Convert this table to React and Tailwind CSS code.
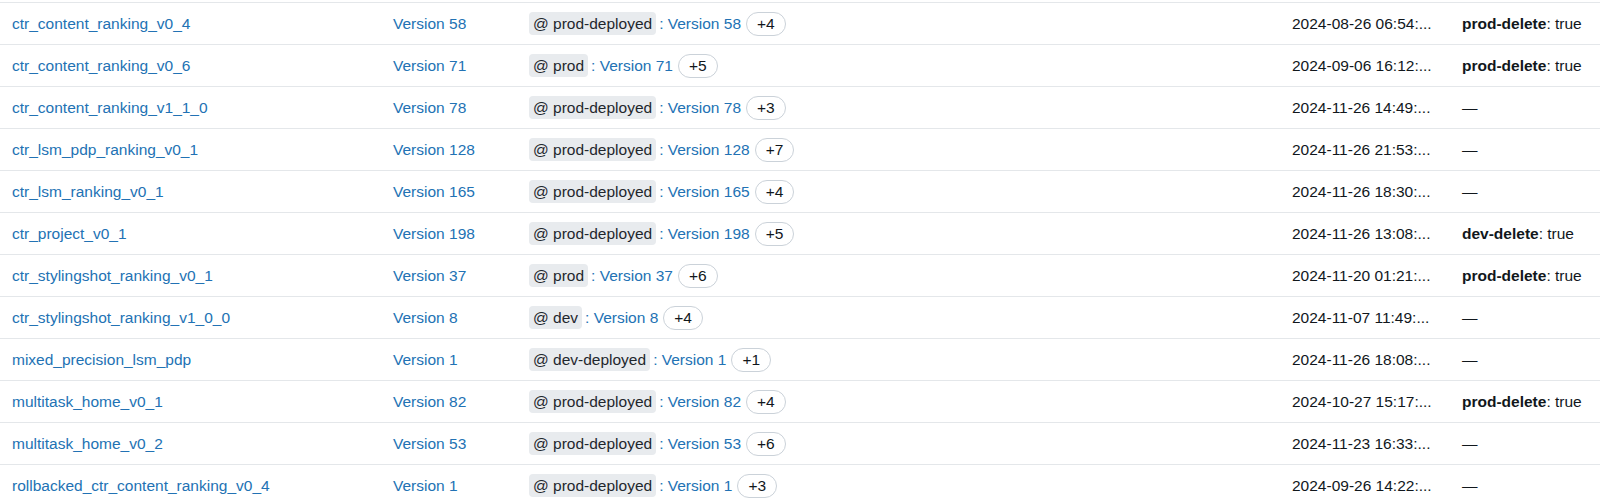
import React from "react";

const rows = [
  ["ctr_content_ranking_v0_4", "58", "prod-deployed", "+4", "2024-08-26 06:54:...", "prod-delete"],
  ["ctr_content_ranking_v0_6", "71", "prod", "+5", "2024-09-06 16:12:...", "prod-delete"],
  ["ctr_content_ranking_v1_1_0", "78", "prod-deployed", "+3", "2024-11-26 14:49:...", null],
  ["ctr_lsm_pdp_ranking_v0_1", "128", "prod-deployed", "+7", "2024-11-26 21:53:...", null],
  ["ctr_lsm_ranking_v0_1", "165", "prod-deployed", "+4", "2024-11-26 18:30:...", null],
  ["ctr_project_v0_1", "198", "prod-deployed", "+5", "2024-11-26 13:08:...", "dev-delete"],
  ["ctr_stylingshot_ranking_v0_1", "37", "prod", "+6", "2024-11-20 01:21:...", "prod-delete"],
  ["ctr_stylingshot_ranking_v1_0_0", "8", "dev", "+4", "2024-11-07 11:49:...", null],
  ["mixed_precision_lsm_pdp", "1", "dev-deployed", "+1", "2024-11-26 18:08:...", null],
  ["multitask_home_v0_1", "82", "prod-deployed", "+4", "2024-10-27 15:17:...", "prod-delete"],
  ["multitask_home_v0_2", "53", "prod-deployed", "+6", "2024-11-23 16:33:...", null],
  ["rollbacked_ctr_content_ranking_v0_4", "1", "prod-deployed", "+3", "2024-09-26 14:22:...", null],
];

const App = () => {
  return (
    <div
      className="w-[1600px] h-[503px] overflow-hidden bg-white text-[15.5px] text-[#11171c]"
      style={{ fontFamily: "'Liberation Sans', Arial, sans-serif" }}
    >
      <div className="h-[2px]" />
      {rows.map(([name, ver, alias, more, date, tag]) => (
        <div
          key={name}
          className="grid grid-cols-[381px_136px_763px_170px_1fr] h-[42px] items-center border-t border-[#e4e7ea] whitespace-nowrap"
        >
          <div className="px-3 text-[#2272b4] truncate">{name}</div>
          <div className="px-3 text-[#2272b4]">Version {ver}</div>
          <div className="px-3 flex items-center">
            <span className="bg-[#e8ebee] rounded-[4px] px-1 h-[23px] flex items-center text-[#1f272d]">
              @ {alias}
            </span>
            <span className="text-[#2272b4] ml-[3px]">: Version {ver}</span>
            <span className="ml-[5px] h-[24px] px-[10px] rounded-full border border-[#cbd2d9] flex items-center text-[#11171c]">
              {more}
            </span>
          </div>
          <div className="px-3">{date}</div>
          <div className="px-3">
            {tag ? (
              <span>
                <span className="font-bold">{tag}</span>: true
              </span>
            ) : (
              <span>—</span>
            )}
          </div>
        </div>
      ))}
    </div>
  );
};

export default App;
